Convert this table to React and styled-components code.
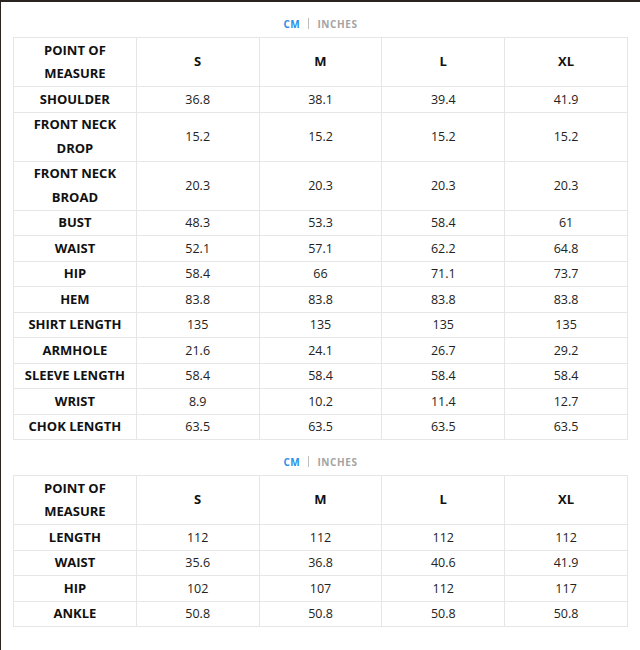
import React from "react";
import styled, { createGlobalStyle } from "styled-components";

const GlobalStyle = createGlobalStyle`
  html, body {
    margin: 0;
    padding: 0;
    background: #ffffff;
  }
  body {
    font-family: "Open Sans", "Noto Sans", Arial, sans-serif;
  }
`;

const Frame = styled.div`
  width: 640px;
  height: 650px;
  box-sizing: border-box;
  border-top: 2px solid #2a2420;
  border-left: 1px solid #2a2420;
  padding: 0 12px;
  background: #fff;
  display: flex;
  flex-direction: column;
`;

const Toggle = styled.div`
  height: 35px;
  box-sizing: border-box;
  padding-top: 8px;
  display: flex;
  align-items: center;
  justify-content: center;
  gap: 8px;
  font-size: 10px;
  font-weight: 700;
  letter-spacing: 0.6px;
`;

const Unit = styled.span`
  color: ${(p) => (p.active ? "#2e8ee8" : "#a3a3a3")};
`;

const Divider = styled.span`
  width: 1px;
  height: 11px;
  background: #bdbdbd;
`;

const Table = styled.table`
  width: 615px;
  border-collapse: collapse;
  table-layout: fixed;
`;

const Cell = styled.td`
  border: 1px solid #e6e6e6;
  padding: 0.5px 4px;
  text-align: center;
  line-height: 23.5px;
  font-size: ${(p) => (p.head ? "13px" : "12.5px")};
  font-weight: ${(p) => (p.head ? 700 : 400)};
  color: ${(p) => (p.head ? "#111" : "#222")};
`;

const sizes = ["S", "M", "L", "XL"];

const topRows = [
  ["SHOULDER", "36.8", "38.1", "39.4", "41.9"],
  ["FRONT NECK DROP", "15.2", "15.2", "15.2", "15.2"],
  ["FRONT NECK BROAD", "20.3", "20.3", "20.3", "20.3"],
  ["BUST", "48.3", "53.3", "58.4", "61"],
  ["WAIST", "52.1", "57.1", "62.2", "64.8"],
  ["HIP", "58.4", "66", "71.1", "73.7"],
  ["HEM", "83.8", "83.8", "83.8", "83.8"],
  ["SHIRT LENGTH", "135", "135", "135", "135"],
  ["ARMHOLE", "21.6", "24.1", "26.7", "29.2"],
  ["SLEEVE LENGTH", "58.4", "58.4", "58.4", "58.4"],
  ["WRIST", "8.9", "10.2", "11.4", "12.7"],
  ["CHOK LENGTH", "63.5", "63.5", "63.5", "63.5"],
];

const bottomRows = [
  ["LENGTH", "112", "112", "112", "112"],
  ["WAIST", "35.6", "36.8", "40.6", "41.9"],
  ["HIP", "102", "107", "112", "117"],
  ["ANKLE", "50.8", "50.8", "50.8", "50.8"],
];

function SizeChart({ rows }) {
  return (
    <>
      <Toggle>
        <Unit active>CM</Unit>
        <Divider />
        <Unit>INCHES</Unit>
      </Toggle>
      <Table>
        <tbody>
          <tr>
            <Cell head>
              POINT OF
              <br />
              MEASURE
            </Cell>
            {sizes.map((s) => (
              <Cell head key={s}>
                {s}
              </Cell>
            ))}
          </tr>
          {rows.map((r, i) => (
            <tr key={i}>
              <Cell head>{r[0]}</Cell>
              {r.slice(1).map((v, j) => (
                <Cell key={j}>{v}</Cell>
              ))}
            </tr>
          ))}
        </tbody>
      </Table>
    </>
  );
}

export default function App() {
  return (
    <>
      <GlobalStyle />
      <Frame>
        <SizeChart rows={topRows} />
        <SizeChart rows={bottomRows} />
      </Frame>
    </>
  );
}
